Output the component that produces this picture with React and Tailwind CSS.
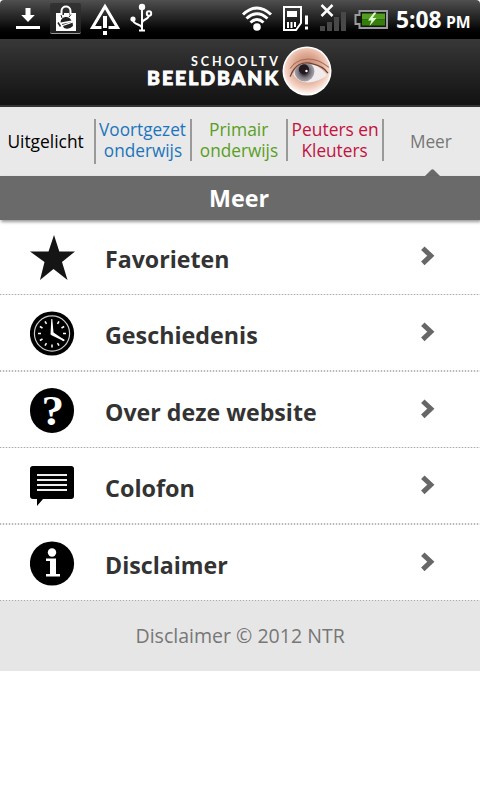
import React from 'react';

const DROID = 'font-["Open_Sans","Noto_Sans",sans-serif]';

function Download() {
  return (
    <svg className="w-6 h-6 shrink-0" viewBox="0 0 24 24" fill="#fff">
      <path d="M9.500 1h5v7h4.300L12 15 5.200 8h4.300zM0 19h24v3H0z" />
    </svg>
  );
}

function Bag() {
  return (
    <div className="w-[31px] h-[31px] rounded-[2px] bg-gradient-to-b from-[#333] to-[#202020] border-b border-[#999] flex items-center justify-center shrink-0">
      <svg className="w-[22px] h-[27px]" viewBox="0 0 22 27">
        <path d="M6.500 10V6c0-6 9-6 9 0v4" fill="none" stroke="#fff" strokeWidth="2" />
        <path d="M1 8h5v2h3V8h5v2h2V8h5v18H1z" fill="#fff" />
        <path d="M7 13l-1-3M14 12l2-2.500" stroke="#222" strokeWidth="1" />
        <path d="M5.500 17.500c0-6 8-8 11-2z" fill="#222" />
        <path d="M7 19l10.500-2 .5 4q-4 4-9 2z" fill="#222" />
        <path d="M2 20l4 1 12-4" fill="none" stroke="#fff" strokeWidth="1.300" />
        <path d="M3 17.500l2.500 4" stroke="#222" strokeWidth="1.500" />
      </svg>
    </div>
  );
}

function Warning() {
  return (
    <svg className="w-8 h-8 shrink-0" viewBox="0 0 32 32">
      <path d="M12.500 24.500H3.500L16 3.500l12.500 21h-9" fill="none" stroke="#fff" strokeWidth="3" />
      <path d="M14 13h4v12h-4zM14 28h4v4h-4z" fill="#fff" />
    </svg>
  );
}

function Usb() {
  return (
    <svg className="w-[23px] h-[30px] shrink-0" viewBox="0 0 23 30">
      <g fill="none" stroke="#fff" strokeWidth="2">
        <path d="M12 4v24M3 17c0 5 9 4 9 8M19 12c0 5-7 4-7 8" />
        <circle cx="19" cy="10.500" r="2.200" />
      </g>
      <circle cx="12" cy="4" r="3.200" fill="#fff" />
      <circle cx="3" cy="16" r="2.600" fill="#fff" />
      <path d="M9 26.500h6v2H9z" fill="#fff" />
    </svg>
  );
}

function StatusIcons() {
  return (
    <svg className="w-[150px] h-[38px] shrink-0" viewBox="240 0 150 38">
      <g fill="none" stroke="#fff" strokeWidth="3">
        <path d="M243 14.500Q257 1.500 271 14.500" />
        <path d="M246.500 18.500Q257 9 267.500 18.500" />
        <path d="M250.500 22.500Q257 16.500 263.500 22.500" />
      </g>
      <circle cx="257" cy="27" r="3.800" fill="#fff" />
      <path d="M284 7h17v16l-5 7h-12z" fill="none" stroke="#fff" strokeWidth="2" />
      <path d="M287 11h10v6h-10zM287 22h2v6h-2zM290.500 22h2v6h-2zM294 22h2v5h-2zM305 15.500h3v9h-3zM305 26.500h3v3h-3z" fill="#fff" />
      <path d="M321.500 5l11 11M332.500 5l-11 11" stroke="#fff" strokeWidth="2.500" />
      <path d="M320 26h5v5h-5zM327 22h5v9h-5zM334 17h5v14h-5zM341 12h5v19h-5z" fill="#484848" />
      <path d="M359.500 11h27.500v17h-27.500v-4h-4v-9h4z" fill="#14180f" stroke="#9a9aa0" strokeWidth="2" />
      <path d="M362 13.500h23v6h-23z" fill="#529e20" />
      <path d="M362 19.500h23v6h-23z" fill="#347f0c" />
      <path d="M374 12.500l-6 8h3.500l-2 5.500 7-8h-4l4-5.500z" fill="#e5ffd4" />
    </svg>
  );
}

function Eye() {
  return (
    <svg className="w-[50px] h-[50px] shrink-0" viewBox="0 0 49 49">
      <defs>
        <radialGradient id="skin" cx=".5" cy=".42" r=".6">
          <stop offset="0" stopColor="#b97a62" />
          <stop offset=".5" stopColor="#e0aa94" />
          <stop offset=".78" stopColor="#f4d3c5" />
          <stop offset="1" stopColor="#fff" />
        </radialGradient>
        <radialGradient id="iris" cx=".5" cy=".5" r=".5">
          <stop offset=".3" stopColor="#3a3038" />
          <stop offset=".6" stopColor="#77737b" />
          <stop offset="1" stopColor="#a9a7ad" />
        </radialGradient>
        <clipPath id="lid">
          <path d="M11 28C13 19 21 15.500 30 18q9 3 14 11-8 6-18 7-10 0-15-8z" />
        </clipPath>
      </defs>
      <circle cx="24.500" cy="24.500" r="24" fill="#fff" />
      <circle cx="24.500" cy="24.500" r="22.500" fill="url(#skin)" />
      <g clipPath="url(#lid)">
        <path d="M0 0h49v49H0z" fill="#f0ebed" />
        <circle cx="22" cy="25" r="9.800" fill="url(#iris)" />
        <circle cx="21.500" cy="22.800" r="5" fill="#211820" />
        <circle cx="24" cy="24.500" r="1.200" fill="#fff" />
      </g>
      <path d="M8 30C12 19 20 14.500 30 17.500q10 2 15 9" fill="none" stroke="#6c4338" strokeWidth="1.300" />
      <path d="M8 22C15 11 31 9 46 21" fill="none" stroke="#a36d59" strokeWidth="1" />
    </svg>
  );
}

function Star() {
  return (
    <svg className="w-[46px] h-[46px]" viewBox="0 0 46 46">
      <path d="M24 0l5.300 16.500H45L32 27l5.500 18L23.500 34 10 45l4.500-18L0 16.500h18.500z" fill="#151515" />
    </svg>
  );
}

function Clock() {
  return (
    <svg className="w-[45px] h-[45px]" viewBox="0 0 45 45">
      <circle cx="22" cy="22.500" r="22.100" fill="#000" />
      <circle cx="22" cy="22.500" r="17.600" fill="none" stroke="#ccc" strokeWidth="1.200" />
      <g stroke="#fff" strokeWidth="1.500">
        {[1, 2, 3, 4, 5, 6, 7, 8, 9, 10, 11].map((h) => (
          <path key={h} d="M22 8.500v3" transform={`rotate(${h * 30} 22 22.500)`} />
        ))}
      </g>
      <path d="M21.300 8h1L23.500 21.500 34.500 29l-.5 1.200L22 24.500l-1.500-1z" fill="#fff" />
    </svg>
  );
}

function Question() {
  return (
    <div className="w-11 h-[45px] rounded-full bg-black text-white flex justify-center items-center">
      <span className='font-["Liberation_Serif",serif] font-bold text-[43px] leading-[45px] scale-x-[1.050] ml-[1px]'>?</span>
    </div>
  );
}

function Speech() {
  return (
    <svg className="w-[45px] h-[40px]" viewBox="0 0 45 40">
      <path d="M3 0h38q3 0 3 3v27q0 3-3 3H13l-6 7v-7H3q-3 0-3-3V3q0-3 3-3z" fill="#000" />
      <path d="M7 9h30M7 14h30M7 19h30M7 24h30" stroke="#eee" strokeWidth="2" />
    </svg>
  );
}

function Info() {
  return (
    <svg className="w-[45px] h-[45px]" viewBox="0 0 45 45">
      <circle cx="22" cy="22.500" r="22.100" fill="#000" />
      <circle cx="22" cy="11.500" r="4.200" fill="#fff" />
      <path d="M16 17.500h10V33h4v2.500H16V33h4V20h-4z" fill="#fff" />
    </svg>
  );
}

function Chevron() {
  return (
    <svg className="w-[15px] h-5 mr-[45px] shrink-0" viewBox="0 0 15 20">
      <path d="M2.800 2.200l8 7.600-8 7.600" fill="none" stroke="#676767" strokeWidth="5" />
    </svg>
  );
}

const dots = 'bg-[repeating-linear-gradient(90deg,#aaa_0_1px,#e5e5e5_1px_3px)]';
const softDots = 'bg-[repeating-linear-gradient(90deg,#b8b8b8_0_1px,#f0f0f0_1px_3px)]';

function Row({ icon, label, height, iconPad, labelPad, chevPad, scale, line }) {
  return (
    <div className={`${height} flex flex-col`}>
      <div className="flex-1 min-h-0 flex items-start">
        <div className={`w-[75px] ml-[30px] shrink-0 ${iconPad}`}>{icon}</div>
        <div className={`flex-1 whitespace-nowrap ${labelPad}`}>
          <span className={`inline-block origin-left text-[24px] leading-8 font-bold text-[#333] ${scale}`}>{label}</span>
        </div>
        <div className={chevPad}><Chevron /></div>
      </div>
      <div className={`${line} ${line === 'h-px' ? dots : softDots}`} />
    </div>
  );
}

function Tab({ lines, width, color, scale, divider }) {
  return (
    <div className={`${width} ${color} h-full shrink-0 flex items-start pt-3`}>
      <div className="flex-1 h-[42px] flex flex-col items-center justify-center text-[18px] leading-[21px] whitespace-nowrap">
        {lines.map((l, i) => (
          <span key={l} className={`block ${scale[i]}`}>{l}</span>
        ))}
      </div>
      <div className={`w-[2px] bg-[#999] ${divider}`} />
    </div>
  );
}

export default function App() {
  return (
    <div className={`w-[480px] h-[800px] bg-white overflow-hidden flex flex-col ${DROID}`}>
      <div className="h-[39px] shrink-0 bg-gradient-to-b from-[#505050] via-[#202020] to-black rounded-t-[4px] flex items-start overflow-hidden">
        <div className="ml-4 mt-[7px]"><Download /></div>
        <div className="ml-[10px] mt-[3px]"><Bag /></div>
        <div className="ml-2 mt-[3px]"><Warning /></div>
        <div className="ml-[9px] mt-[3px]"><Usb /></div>
        <div className="ml-[87px]"><StatusIcons /></div>
        <div className="ml-[6px] mt-[3px] flex items-baseline text-white font-bold whitespace-nowrap leading-8">
          <span className="text-[24px] w-[50px]"><span className="inline-block origin-left scale-x-[.950]">5:08</span></span>
          <span className="text-[16px]"><span className="inline-block origin-left scale-x-[.980]">PM</span></span>
        </div>
      </div>
      <div className="h-[68px] shrink-0 bg-gradient-to-b from-[#383838] to-[#121212] border-b-2 border-[#333] flex items-start pt-[7px]">
        <div className='ml-[147px] w-[135px] mt-[9px] text-white font-["Lato",sans-serif] whitespace-nowrap'>
          <div className="ml-[44px] text-[12.500px] leading-[14px] font-bold tracking-[2.900px]">SCHOOLTV</div>
          <div className="text-[18px] leading-[18px] font-black tracking-[1.900px] [-webkit-text-stroke:0.900px_white] origin-left scale-x-[1.075]">BEELDBANK</div>
        </div>
        <Eye />
      </div>
      <div className="h-[69px] shrink-0 bg-[#e9e9e9] flex items-start">
        <Tab lines={['Uitgelicht']} width="w-24 [&>div:first-child]:pt-[2px] [&>div:first-child]:pr-[2px]" color="text-black" scale={['scale-x-[.965]']} divider="h-[45px]" />
        <Tab lines={['Voortgezet', 'onderwijs']} width="w-24" color="text-[#1c75bc]" scale={['scale-x-[.955]', 'scale-x-[.955]']} divider="h-[42px]" />
        <Tab lines={['Primair', 'onderwijs']} width="w-24" color="text-[#5a9e24]" scale={['scale-x-[.970]', 'scale-x-[.955]']} divider="h-[42px]" />
        <Tab lines={['Peuters en', 'Kleuters']} width="w-24" color="text-[#c41240]" scale={['scale-x-[.965]', 'scale-x-[.955]']} divider="h-[42px]" />
        <div className="w-24 h-full flex flex-col items-center text-[#777]">
          <span className="mt-6 mr-[2px] text-[18px] leading-[21px] scale-x-[.960]">Meer</span>
          <svg className="w-[15px] h-[7px] mt-auto" viewBox="0 0 15 7"><path d="M0 7l6-6q1.500-1.500 3 0l6 6z" fill="#6a6a6a" /></svg>
        </div>
      </div>
      <div className="h-11 shrink-0 bg-[#6a6a6a] shadow-[1px_2px_3px_rgba(0,0,0,.4)] text-white font-bold text-[24px] leading-[43px] text-center relative">
        <span className="inline-block scale-x-[.970] mr-[2px]">Meer</span>
      </div>
      <Row icon={<Star />} label="Favorieten" height="h-[75px]" iconPad="pt-[15px]" labelPad="pt-[23px]" chevPad="pt-[26px]" scale="scale-x-[.965]" line="h-px" />
      <Row icon={<Clock />} label="Geschiedenis" height="h-[77px]" iconPad="pt-[16px]" labelPad="pt-[24px]" chevPad="pt-[27px]" scale="scale-x-[.970]" line="h-[2px]" />
      <Row icon={<Question />} label="Over deze website" height="h-[76px]" iconPad="pt-[16px]" labelPad="pt-[24px]" chevPad="pt-[27px]" scale="scale-x-[.965]" line="h-px" />
      <Row icon={<Speech />} label="Colofon" height="h-[77px]" iconPad="pt-[18px]" labelPad="pt-[24px]" chevPad="pt-[27px]" scale="scale-x-[.975]" line="h-[2px]" />
      <Row icon={<Info />} label="Disclaimer" height="h-[76px]" iconPad="pt-[16px]" labelPad="pt-[24px]" chevPad="pt-[27px]" scale="scale-x-[.965]" line="h-px" />
      <div className="h-[70px] shrink-0 bg-[#e6e6e6] text-[#777] text-[20px] leading-[70px] text-center whitespace-nowrap">
        <span className="inline-block scale-x-[.977]">Disclaimer © 2012 NTR</span>
      </div>
    </div>
  );
}
